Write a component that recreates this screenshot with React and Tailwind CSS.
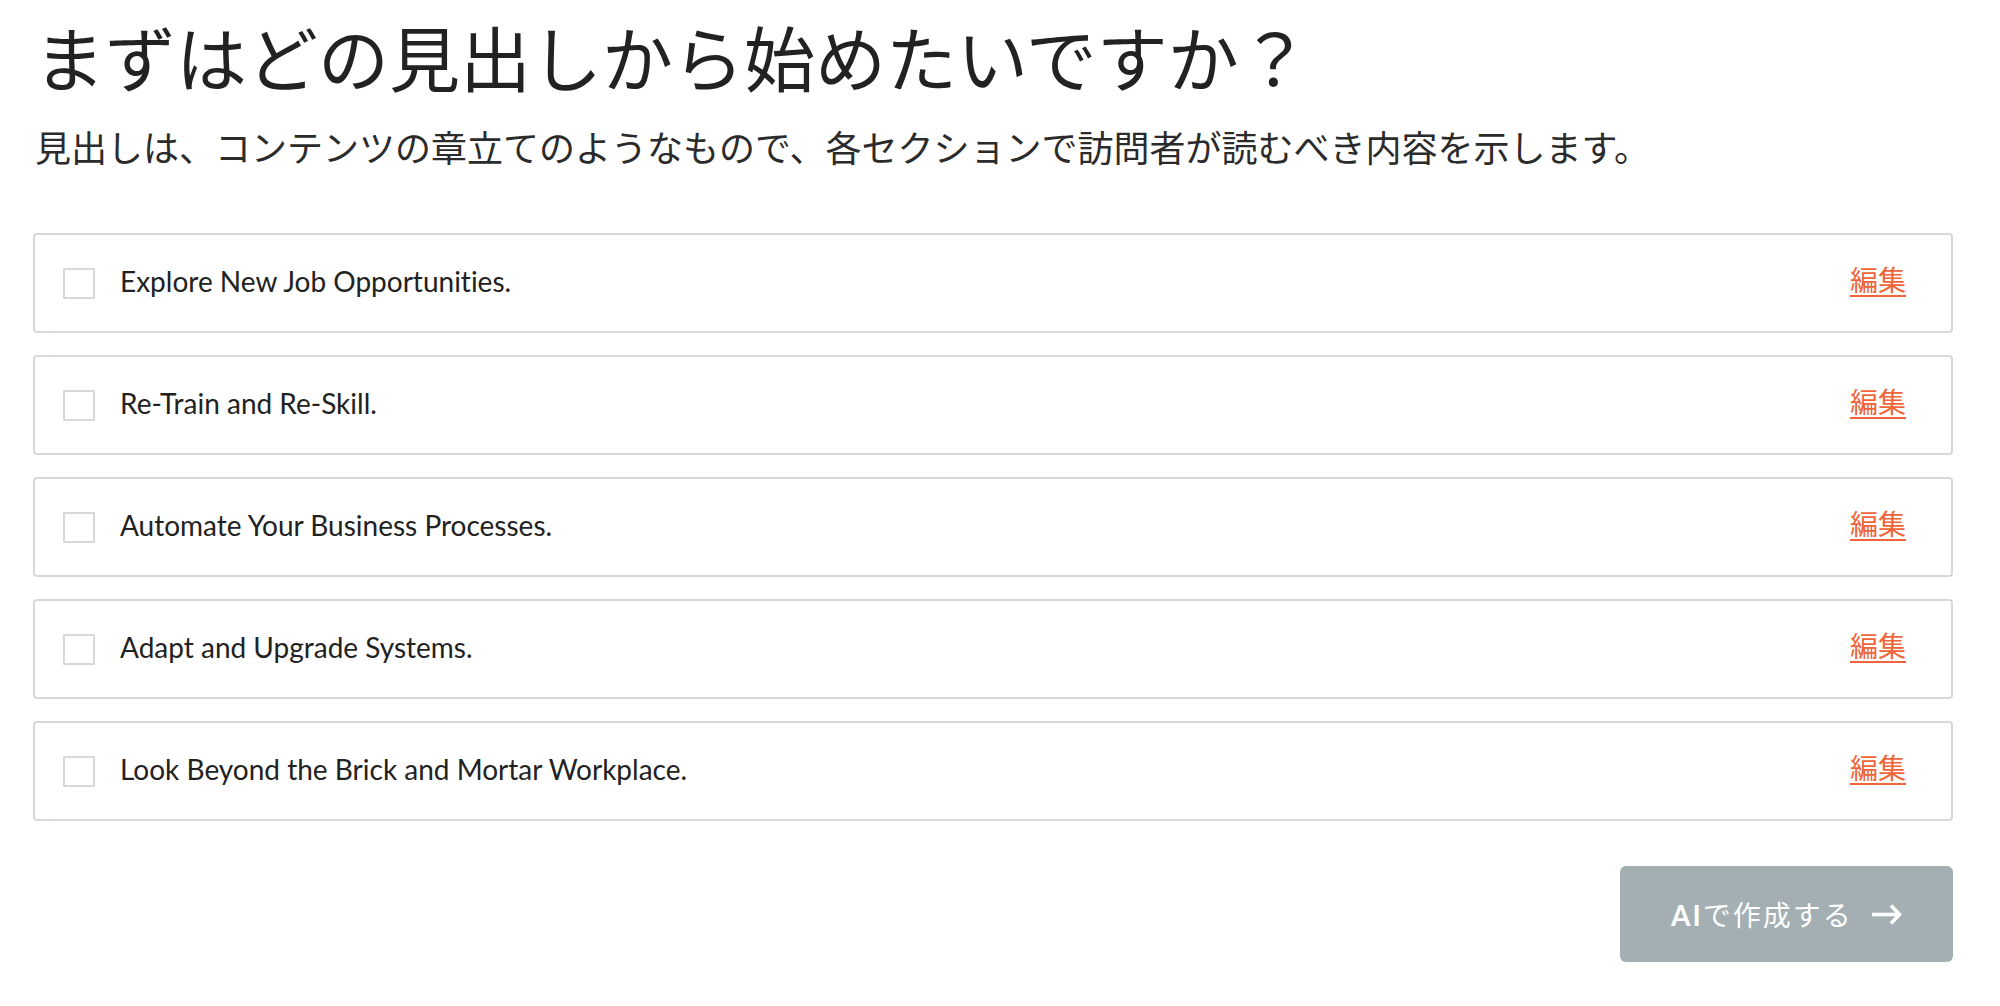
const items = [
  'Explore New Job Opportunities.',
  'Re-Train and Re-Skill.',
  'Automate Your Business Processes.',
  'Adapt and Upgrade Systems.',
  'Look Beyond the Brick and Mortar Workplace.',
]

const jp = { fontFamily: '"Noto Sans CJK JP", "Noto Sans", sans-serif' }
const latin = { fontFamily: 'Lato, "Noto Sans", sans-serif', fontVariantLigatures: 'none' }

function Arrow() {
  return (
    <svg width="31" height="23" viewBox="0 0 31 23" fill="none" stroke="currentColor" strokeWidth="3.6" strokeLinecap="butt" strokeLinejoin="miter">
      <path d="M1 11.5H28" />
      <path d="M20 2.5L28.5 11.5L20 20.5" />
    </svg>
  )
}

export default function App() {
  return (
    <div className="min-h-screen bg-white pl-[33px] pt-[20px] text-[#222]" style={jp}>
      <h1 className="ml-[1px] text-[71px] leading-[70px] font-normal">まずはどの見出しから始めたいですか？</h1>
      <p className="ml-[2px] mt-[38px] text-[36px] leading-[36px] text-[#2b2b2b]">
        見出しは、コンテンツの章立てのようなもので、各セクションで訪問者が読むべき内容を示します。
      </p>

      <div className="mt-[69px] w-[1920px] flex flex-col gap-[22px]">
        {items.map(text => (
          <div key={text} className="h-[100px] flex items-center border-2 border-[#d5d9db] rounded-[4px] pl-[28px] pr-[45px]">
            <span className="w-[32px] h-[31px] border-2 border-[#d5d9db] rounded-[1px] shrink-0" />
            <span className="ml-[25px] -mt-[5px] flex-1 text-[28px] text-[#222]" style={latin}>{text}</span>
            <a href="#" className="-mt-[8px] text-[28px] leading-[28px] text-[#f0643a] underline underline-offset-[4px] decoration-2">編集</a>
          </div>
        ))}
      </div>

      <div className="w-[1920px] flex justify-end mt-[45px]">
        <button className="w-[333px] h-[96px] rounded-[6px] bg-[#a3afb2] text-white flex items-center justify-center gap-[18px]">
          <span className="text-[28px] tracking-[2px]">
            <span className="font-bold" style={latin}>AI</span>で作成する
          </span>
          <Arrow />
        </button>
      </div>
    </div>
  )
}
